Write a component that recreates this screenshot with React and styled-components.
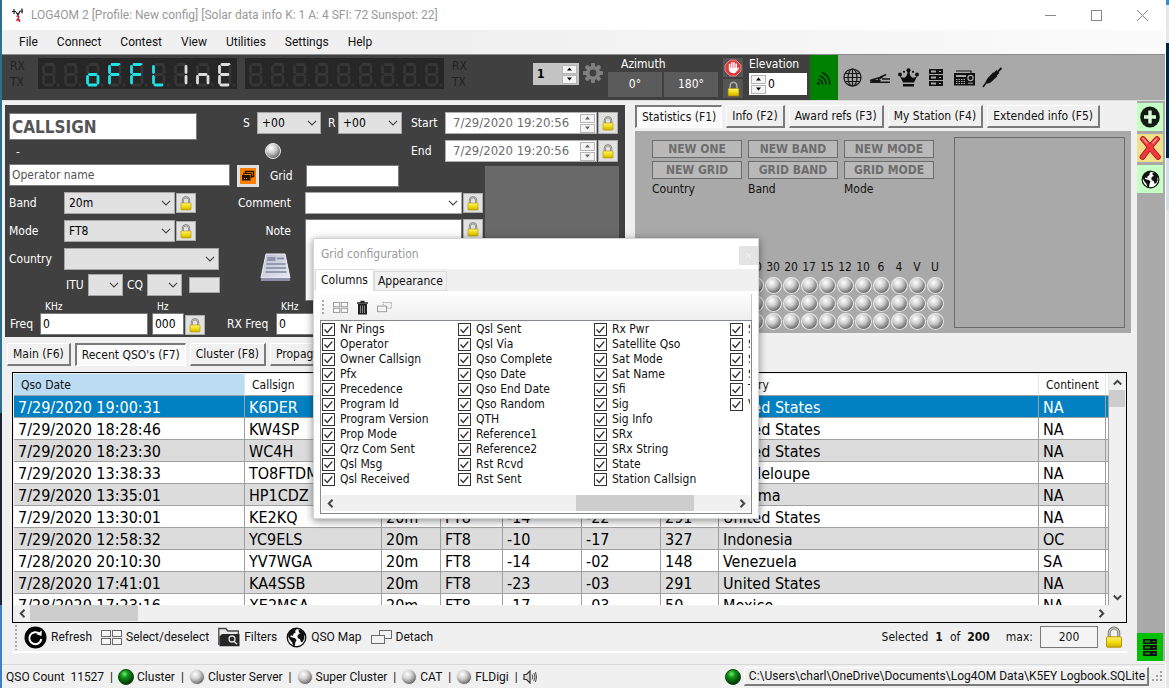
import React from "react";
import styled, { createGlobalStyle, css } from "styled-components";

const ui = `"DejaVu Sans Condensed", "Noto Sans", sans-serif`;
const shell = `Roboto, "Open Sans", sans-serif`;

const GlobalStyle = createGlobalStyle`
  *, *::before, *::after { box-sizing: border-box; }
  body { margin: 0; font-family: ${ui}; font-size: 12px; line-height: 16px; color: #111; }
  button, input, select, textarea { font: inherit; color: inherit; margin: 0; padding: 0; border-radius: 0; }
  button { background: none; border: 0; }
  svg { display: block; flex: none; }
`;

/* ---------- shell ---------- */

const Desktop = styled.div`
  display: flex;
  height: 100vh;
  min-height: 640px;
  padding: 0 3px 0 2px;
  background: linear-gradient(#3c8ecb 5px, #e4e8ea 5px 43px, #04233f 43px 158px, #d3dde6 158px 210px, #e6e6e6 210px) right / 3px 100% no-repeat,
    linear-gradient(#2d6f8c 0 60%, #1c2535 60% 88%, #3f7fc8 88%);
`;
const Window = styled.div`
  position: relative;
  flex: 1;
  min-width: 0;
  display: flex;
  flex-direction: column;
  background: #f0f0f0;
  border-right: 1px solid #fff;
`;
const TitleBar = styled.header`
  display: flex;
  align-items: center;
  height: 30px;
  padding: 0 16px 0 9px;
  gap: 6px;
  background: #fff;
  color: #999;
  font-family: ${shell};
`;
const TitleText = styled.h1`
  flex: 1;
  margin: 0;
  font-size: 12px;
  font-weight: 400;
  white-space: nowrap;
`;
const WindowButtons = styled.div`
  display: flex;
  gap: 33px;
  button { width: 13px; height: 13px; }
`;
const MenuBar = styled.nav`
  display: flex;
  align-items: center;
  gap: 19px;
  height: 24px;
  padding-left: 17px;
  background: linear-gradient(90deg, #f0f0f0 40%, #fbfbfb);
  font-family: ${shell};
`;
const MenuItem = styled.button``;

/* ---------- rig bar ---------- */

const RigBar = styled.div`
  display: flex;
  height: 47px;
  border-top: 1px solid #8c8c8c;
  border-bottom: 1px solid #dcdcdc;
  background: #a9a9a9;
`;
const RigDark = styled.div`
  display: flex;
  flex: none;
  width: 808px;
  padding: 3px 0 0 8px;
  background: #404040;
  color: #fff;
`;
const RxTx = styled.div`
  width: 28px;
  color: #222;
  line-height: 16px;
`;
const Led = styled.div`
  width: 199px;
  height: 31px;
  padding: 4px 0 0 4px;
  margin-right: 8px;
  background: #262626;
`;
const RigTools = styled.div`
  display: flex;
  align-items: flex-start;
  margin-left: auto;
  padding-right: 3px;
`;
const Stack = styled.div`
  display: flex;
  flex-direction: column;
  gap: ${(p) => p.$gap || 0}px;
  margin-left: ${(p) => p.$ml || 0}px;
`;
const FieldCaption = styled.span`
  padding-left: ${(p) => p.$pad || 0}px;
  line-height: 12px;
`;
const RigNumber = styled.div`
  display: flex;
  gap: 4px;
  padding-top: 5px;
`;
const Heading = styled.div`
  display: flex;
  gap: 2px;
`;
const HeadingValue = styled.output`
  width: 54px;
  height: 25px;
  background: #5b5b5b;
  text-align: center;
  line-height: 25px;
`;
const SpinBox = styled.div`
  display: flex;
  align-items: center;
  width: ${(p) => p.$w}px;
  height: 22px;
  padding: 1px;
  background: ${(p) => p.$bg || "#fff"};
  border: 1px solid ${(p) => p.$bg || "#fff"};
  color: #000;
  input {
    flex: 1;
    min-width: 0;
    width: 0;
    padding-left: 2px;
    border: 0;
    background: transparent;
    font-weight: ${(p) => (p.$bold ? 700 : 400)};
  }
`;
const SpinButtons = styled.div`
  display: flex;
  flex-direction: column;
  gap: 1px;
  width: 15px;
  button {
    display: grid;
    place-items: center;
    height: 9px;
    background: #f4f4f4;
    border: 1px solid #b5b5b5;
  }
`;
const ToolIcon = styled.button`
  display: grid;
  place-items: center;
  width: 28px;
  height: 45px;
  background: ${(p) => (p.$on ? "#008000" : "transparent")};
`;
const SquareTool = styled.button`
  display: grid;
  place-items: center;
  width: 20px;
  height: 19px;
  background: #555;
`;

/* ---------- body ---------- */

const Body = styled.main`
  flex: 1;
  min-height: 0;
  display: flex;
  margin-bottom: 3px;
`;
const Content = styled.div`
  flex: 1;
  min-width: 0;
  display: flex;
  flex-direction: column;
  padding-top: 4px;
`;
const Rail = styled.aside`
  display: flex;
  flex-direction: column;
  gap: 3px;
  width: 28px;
  padding-top: 2px;
  background: #a9a9a9;
`;
const RailButton = styled.button`
  display: grid;
  place-items: center;
  width: 26px;
  height: 28px;
  background: ${(p) => p.$bg};
  &:last-child { margin-top: auto; }
`;
const Upper = styled.div`
  display: flex;
  gap: 10px;
  height: 232px;
  padding: 0 6px 0 3px;
`;

/* ---------- QSO entry ---------- */

const Entry = styled.form`
  flex: none;
  width: 620px;
  background: #404040;
  color: #fff;
`;
const EntryTop = styled.div`
  display: flex;
  height: 192px;
`;
const EntryLeft = styled.div`
  width: 227px;
  padding: 8px 0 0 4px;
`;
const EntryRight = styled.div`
  flex: 1;
  padding: 7px 0 0 5px;
`;
const TextInput = styled.input`
  width: ${(p) => p.$w}px;
  height: ${(p) => p.$h || 22}px;
  padding: 0 2px;
  background: #fff;
  border: 1px solid #7a7a7a;
  color: #000;
  font-size: ${(p) => p.$size || 12}px;
  font-weight: ${(p) => (p.$bold ? 700 : 400)};
  &::placeholder { color: #555; opacity: 1; }
`;
const Dash = styled.div`
  height: 24px;
  padding-left: 7px;
  line-height: 24px;
`;
const FormRow = styled.div`
  display: flex;
  align-items: center;
  gap: 1px;
  height: ${(p) => p.$h || 28}px;
  padding-left: ${(p) => p.$pl || 0}px;
  margin-top: ${(p) => p.$mt || 0}px;
`;
const Label = styled.label`
  flex: none;
  width: ${(p) => (p.$w ? p.$w + "px" : "auto")};
  margin-left: ${(p) => p.$ml || 0}px;
`;
const SelectWrap = styled.span`
  display: grid;
  align-items: center;
  width: ${(p) => p.$w}px;
  height: 22px;
  color: #000;
  select, svg { grid-area: 1 / 1; }
  select {
    width: 100%;
    height: 100%;
    padding: 0 18px 0 4px;
    appearance: none;
    background: ${(p) => (p.$white ? "#fff" : "#e1e1e1")};
    border: 1px solid #a6a6a6;
  }
  svg { justify-self: end; margin-right: 4px; pointer-events: none; }
`;
const LockButton = styled.button`
  display: grid;
  place-items: center;
  flex: none;
  width: 20px;
  height: ${(p) => p.$h || 20}px;
  background: #e1e1e1;
  border: 1px solid #adadad;
`;
const ZoneBox = styled.output`
  width: 31px;
  height: 16px;
  margin-left: 6px;
  background: #e1e1e1;
  border: 1px solid #a6a6a6;
`;
const DateBox = styled.div`
  display: flex;
  align-items: center;
  width: 152px;
  height: 22px;
  padding: 1px;
  background: #fff;
  border: 1px solid #b0b0b0;
  color: #6d6d6d;
  font-size: 13px;
  input {
    flex: 1;
    width: 0;
    min-width: 0;
    padding-left: 6px;
    border: 0;
    background: transparent;
  }
`;
const EntryDetail = styled.div`
  display: flex;
`;
const DetailFields = styled.div`
  width: 248px;
`;
const DetailRow = styled.div`
  display: flex;
  align-items: ${(p) => (p.$top ? "flex-start" : "center")};
  gap: 1px;
  margin-top: ${(p) => p.$mt || 0}px;
`;
const LookupButton = styled.button`
  display: grid;
  place-items: center;
  width: 22px;
  height: 22px;
  border: 3px solid #e1e1e1;
  background: #ff8000;
`;
const NoteSide = styled.div`
  display: flex;
  flex-direction: column;
  align-items: flex-end;
  gap: 14px;
  width: 54px;
  padding-top: 4px;
`;
const NoteArea = styled.textarea`
  width: 157px;
  height: 82px;
  margin-left: 13px;
  resize: none;
  background: #fff;
  border: 1px solid #7a7a7a;
`;
const Photo = styled.div`
  width: 134px;
  height: 134px;
  margin-top: 4px;
  background: #696969;
`;
const FreqRow = styled.div`
  display: flex;
  align-items: flex-end;
  gap: 1px;
  height: 38px;
  padding-left: 5px;
`;
const FreqField = styled.label`
  display: flex;
  flex-direction: column;
  margin-right: ${(p) => p.$mr || 0}px;
  span { padding-left: 5px; font-size: 10px; line-height: 13px; }
`;
const FreqLabel = styled.span`
  width: ${(p) => p.$w}px;
  margin-left: ${(p) => p.$ml || 0}px;
  line-height: 22px;
`;

/* ---------- tabs ---------- */

const TabRow = styled.div`
  display: flex;
  gap: 4px;
  margin: ${(p) => p.$m || 0};
`;
const Tab = styled.button`
  padding: 0 5px;
  height: 23px;
  white-space: nowrap;
  background: #f0f0f0;
  border: 1px solid #fff;
  border-right: 2px solid #7b7b7b;
  border-bottom: 2px solid #7b7b7b;
  ${(p) =>
    p.$active &&
    css`
      background: #fafafa;
      border: 1px solid #fff;
      border-top: 2px solid #7b7b7b;
      border-left: 2px solid #7b7b7b;
    `}
`;

/* ---------- statistics ---------- */

const StatsColumn = styled.section`
  flex: 1;
  min-width: 0;
  display: flex;
  flex-direction: column;
`;
const StatsPanel = styled.div`
  display: flex;
  height: 202px;
  margin-top: 3px;
  background: #a9a9a9;
`;
const StatsMain = styled.div`
  flex: 1;
  display: flex;
  flex-direction: column;
  padding: 9px 10px 3px 17px;
`;
const FlagGrid = styled.div`
  display: grid;
  grid-template-columns: repeat(3, 90px);
  gap: 3px 6px;
`;
const Flag = styled.button`
  height: 18px;
  background: #b9b9b9;
  border: 1px solid #6d6d6d;
  color: #6d6d6d;
  font-weight: 700;
  line-height: 16px;
`;
const FlagLabel = styled.span`
  line-height: 14px;
`;
const BandGrid = styled.div`
  display: grid;
  grid-template-columns: repeat(14, 18px);
  grid-auto-rows: 18px;
  place-items: center;
  margin: auto 0 0 auto;
`;
const Preview = styled.div`
  width: 171px;
  margin: 6px 6px 5px 0;
  border: 1px solid #6b6b6b;
`;

/* ---------- log table ---------- */

const LogBox = styled.section`
  flex: 1;
  min-height: 0;
  display: grid;
  grid-template-columns: minmax(0, 1fr) 16px;
  grid-template-rows: minmax(0, 1fr) 16px;
  margin: 6px 10px 0;
  padding: 1px;
  border: 1px solid #000;
`;
const LogView = styled.div`
  overflow: hidden;
  background: #fff;
`;
const LogTable = styled.table`
  width: 100%;
  table-layout: fixed;
  border-collapse: separate;
  border-spacing: 0;
  font-size: 16px;
  th {
    height: 22px;
    padding: 0 7px;
    text-align: left;
    font-size: 12px;
    font-weight: 400;
    background: #fff;
    border-right: 1px solid #dfe6ea;
    border-bottom: 1px solid #a0a0a0;
  }
  th:first-child { background: #bbdcf3; }
  td {
    height: 22px;
    padding: 2px 4px 0;
    line-height: 19px;
    white-space: nowrap;
    overflow: hidden;
    border-right: 1px solid #a0a0a0;
    border-bottom: 1px solid #a0a0a0;
  }
`;
const LogRow = styled.tr`
  background: ${(p) => (p.$selected ? "#0180c2" : p.$alt ? "#dcdcdc" : "#fff")};
  color: ${(p) => (p.$selected ? "#fff" : "#000")};
`;
const ScrollBar = styled.div`
  display: flex;
  flex-direction: ${(p) => (p.$vertical ? "column" : "row")};
  align-items: stretch;
  background: #f0f0f0;
`;
const ScrollArrow = styled.button`
  display: grid;
  place-items: center;
  width: 16px;
  height: 16px;
  &:last-child { margin: ${(p) => p.$push || "0 0 0 auto"}; }
`;
const Thumb = styled.div`
  width: ${(p) => p.$w}px;
  height: ${(p) => p.$h}px;
  margin-left: ${(p) => p.$offset || 0}px;
  background: #cdcdcd;
`;
const LogTools = styled.div`
  display: flex;
  align-items: center;
  height: 30px;
  margin: 0 10px 8px;
  padding: 0 4px 0 3px;
  border-bottom: 2px solid #fff;
`;
const LogTool = styled.button`
  display: flex;
  align-items: center;
  gap: 4px;
  margin-left: ${(p) => p.$ml || 9}px;
  font-family: ${shell};
  white-space: nowrap;
`;
const LogCount = styled.div`
  display: flex;
  align-items: center;
  gap: 7px;
  margin-left: auto;
  white-space: nowrap;
  input {
    width: 58px;
    height: 22px;
    background: #f4f4f4;
    border: 1px solid #7a7a7a;
    text-align: center;
  }
`;

/* ---------- status bar ---------- */

const StatusBar = styled.footer`
  display: flex;
  align-items: center;
  height: 24px;
  padding: 0 1px 0 4px;
  border-top: 1px solid #d7d7d7;
  font-family: ${shell};
  white-space: nowrap;
`;
const StatusItem = styled.span`
  display: flex;
  align-items: center;
  gap: 3px;
  margin-left: ${(p) => (p.$end ? "auto" : 0)};
`;
const Bar = styled.span`
  margin: 0 2px 0 6px;
`;
const PathButton = styled.button`
  height: 19px;
  padding: 0 2px 0 4px;
  border: 1px solid #fff;
  border-right: 2px solid #7b7b7b;
  border-bottom: 2px solid #7b7b7b;
`;

/* ---------- dialog ---------- */

const Dialog = styled.section`
  position: absolute;
  left: 311px;
  top: 238px;
  width: 446px;
  padding-bottom: 4px;
  background: #fff;
  border: 1px solid #d4d4d4;
  box-shadow: 0 2px 8px rgba(0, 0, 0, 0.45);
`;
const DialogTitle = styled.header`
  display: flex;
  justify-content: space-between;
  align-items: flex-start;
  height: 30px;
  padding: 7px 0 0 7px;
  color: #999;
  h2 { margin: 0; font-size: 12px; font-weight: 400; }
`;
const DialogClose = styled.button`
  display: grid;
  place-items: center;
  width: 19px;
  height: 19px;
  background: #e3e3e3;
`;
const DialogTabs = styled.div`
  display: flex;
  align-items: flex-end;
  height: 22px;
  padding-left: 1px;
  background: #f0f0f0;
`;
const DialogTab = styled.button`
  height: ${(p) => (p.$active ? 22 : 20)}px;
  padding: 0 ${(p) => (p.$active ? 5 : 3)}px;
  background: ${(p) => (p.$active ? "#fff" : "#f0f0f0")};
  border: 1px solid #dcdcdc;
  border-bottom-color: ${(p) => (p.$active ? "#fff" : "#dcdcdc")};
`;
const DialogTools = styled.div`
  display: flex;
  align-items: center;
  height: 26px;
  margin: 3px 6px 0;
  padding-left: 2px;
  background: linear-gradient(#fdfdfd, #efefef);
  border-right: 1px solid #c8c8c8;
  button { margin-left: 9px; }
`;
const ColumnBox = styled.div`
  margin: 0 6px;
  padding: 0 1px 2px;
  border: 1px solid #828790;
`;
const ColumnList = styled.div`
  display: grid;
  grid-auto-flow: column;
  grid-auto-columns: 136px;
  grid-template-rows: repeat(11, 15px);
  height: 174px;
  padding-top: 1px;
  overflow: hidden;
`;
const ColumnItem = styled.label`
  display: flex;
  align-items: center;
  gap: 5px;
  height: 15px;
  line-height: 15px;
  white-space: nowrap;
`;
const Check = styled.span`
  display: grid;
  width: 13px;
  height: 13px;
  input, svg { grid-area: 1 / 1; }
  input {
    appearance: none;
    width: 13px;
    height: 13px;
    background: #fff;
    border: 1px solid #333;
  }
  svg { pointer-events: none; visibility: hidden; }
  input:checked + svg { visibility: visible; }
`;

/* ---------- icons ---------- */

const Chevron = ({ turn = 0, size = 9, weight = 1 }) => (
  <svg width={size} height={size} viewBox="0 0 9 9">
    <path d="M.8 2.5 4.5 6.2 8.2 2.5" fill="none" stroke="#444" strokeWidth={weight} transform={`rotate(${turn} 4.5 4.5)`} />
  </svg>
);
const Triangle = ({ up, color = "#000" }) => (
  <svg width="7" height="4" viewBox="0 0 7 4">
    <path d={up ? "M3.5 .5 6 3.5H1z" : "M3.5 3.5 6 .5H1z"} fill={color} />
  </svg>
);
const LockIcon = ({ w = 12, h = 15 }) => (
  <svg width={w} height={h} viewBox="0 0 12 15">
    <defs>
      <linearGradient id="lockBody" x1="0" x2="0" y1="0" y2="1">
        <stop offset="0" stopColor="#fff27a" />
        <stop offset=".5" stopColor="#f2dd10" />
        <stop offset="1" stopColor="#cfae00" />
      </linearGradient>
    </defs>
    <path d="M2.800 8V4.600a3.200 3.400 0 0 1 6.400 0V8" fill="none" stroke="#77766a" strokeWidth="2" />
    <path d="M2.800 8V4.600a3.200 3.400 0 0 1 6.400 0V8" fill="none" stroke="#c9c9c4" strokeWidth=".8" />
    <rect x="1" y="7" width="10" height="7" rx=".8" fill="url(#lockBody)" stroke="#b39200" strokeWidth=".6" />
  </svg>
);
const Ball = ({ green, size = 16 }) => (
  <svg width={size} height={size} viewBox="0 0 16 16">
    <defs>
      <radialGradient id="ballGrey" cx=".38" cy=".32" r=".7">
        <stop offset="0" stopColor="#fff" />
        <stop offset=".45" stopColor="#cfcfcf" />
        <stop offset="1" stopColor="#5e5e5e" />
      </radialGradient>
      <radialGradient id="ballGreen" cx=".4" cy=".3" r=".7">
        <stop offset="0" stopColor="#6cf06c" />
        <stop offset=".35" stopColor="#12941a" />
        <stop offset="1" stopColor="#012c03" />
      </radialGradient>
    </defs>
    <circle cx="8" cy="8" r="7.5" fill={green ? "url(#ballGreen)" : "url(#ballGrey)"} stroke={green ? "#0a4a0a" : "#e9e9e9"} strokeWidth="1" />
  </svg>
);

const SEGMENTS = {
  a: [4, 1.5, 11, 1.5],
  b: [12, 3.5, 12, 9.5],
  c: [12, 13.5, 12, 20],
  d: [3, 22, 10, 22],
  e: [1.5, 13.5, 1.5, 20],
  f: [1.5, 3.5, 1.5, 9.5],
  g: [3.5, 11.5, 10, 11.5],
};
const LIT = { o: "cdeg", F: "aefg", L: "def", I: "bc", n: "ceg", E: "adefg" };

const LedDisplay = ({ chars = "" }) => (
  <svg width="198" height="25" viewBox="0 0 198 25" aria-hidden="true">
    {Array.from({ length: 9 }, (_, i) => {
      const lit = LIT[chars[i]] || "";
      const color = i < 6 ? "#20e0e8" : "#dcdcdc";
      return (
        <g key={i} transform={`translate(${i * 22} 1)`} strokeLinecap="round">
          {Object.entries(SEGMENTS).map(([name, [x1, y1, x2, y2]]) => (
            <line key={name} x1={x1} y1={y1} x2={x2} y2={y2} stroke={lit.includes(name) ? color : "#363636"} strokeWidth="2.8" />
          ))}
          <circle cx="16" cy="22" r="1.4" fill="#363636" />
        </g>
      );
    })}
  </svg>
);

const AppIcon = () => (
  <svg width="14" height="16" viewBox="0 0 14 16">
    <path d="M1 4.5h4M3 2v5M5 5l2 3 2-4M9 4h3M11 1.5v5M7 8V6" stroke="#222" strokeWidth="1.2" fill="none" />
    <path d="M5.5 9.5c2-1.2 3 .2 1.5 1.5M8 10.500l-2 2.500h2.500v2" stroke="#c1272d" strokeWidth="1.4" fill="none" />
  </svg>
);
const GearIcon = () => (
  <svg width="20" height="20" viewBox="0 0 20 20">
    {[0, 45, 90, 135].map((a) => (
      <rect key={a} x="8" y="0" width="4" height="20" rx="1" fill="#808080" transform={`rotate(${a} 10 10)`} />
    ))}
    <circle cx="10" cy="10" r="7.2" fill="#808080" />
    <circle cx="10" cy="10" r="3.4" fill="#404040" />
  </svg>
);
const StopIcon = () => (
  <svg width="18" height="18" viewBox="0 0 18 18">
    <path d="M6 1h6l5 5v6l-5 5H6l-5-5V6z" fill="#e03a40" stroke="#f59a9a" strokeWidth=".8" />
    <path d="M5.600 9V5.500M7.800 8V3.800M10 8V3.800M12.200 9V5" stroke="#fff" strokeWidth="1.500" strokeLinecap="round" />
    <path d="M4.900 8.500h8v2.300c0 2-1.300 3.400-3.200 3.400-2.500 0-3.800-1-4.800-3z" fill="#fff" />
    <path d="M13 11.200l1.300-2" stroke="#fff" strokeWidth="1.400" strokeLinecap="round" />
  </svg>
);
const SignalIcon = () => (
  <svg width="16" height="16" viewBox="0 0 16 16" fill="none" stroke="#0a260a" strokeWidth="1.500">
    <circle cx="2.500" cy="13.500" r="1.500" fill="#0a260a" stroke="none" />
    <path d="M2 9.500a4.500 4.500 0 0 1 4.500 5M3.500 6a8 8 0 0 1 6.500 8.500M6 2.500a11 11 0 0 1 7.500 12" />
  </svg>
);
const GlobeIcon = () => (
  <svg width="19" height="19" viewBox="0 0 19 19" fill="none" stroke="#151515" strokeWidth="1.200">
    <circle cx="9.500" cy="9.500" r="8.500" />
    <ellipse cx="9.500" cy="9.500" rx="4.500" ry="8.500" />
    <path d="M9.500 1v17M1 9.500h17M2.500 5.500h14M2.500 13.500h14" />
  </svg>
);
const KeyerIcon = () => (
  <svg width="22" height="12" viewBox="0 0 22 12">
    <path d="M1 9.500h20V11H1zM3 8h9l-1 1.500H2z" fill="#151515" />
    <path d="M1 8.500 11 5.500 17 2.500M9 8l4-3M13 7h8" stroke="#151515" strokeWidth="1.400" fill="none" />
    <circle cx="12.500" cy="5" r="1.200" fill="#151515" />
  </svg>
);
const CrownIcon = () => (
  <svg width="21" height="19" viewBox="0 0 21 19" fill="#0c0c0c">
    <path d="M5 14.500 1.600 7.500C4 10 6.500 10.500 8 8.500 9.300 7 9.500 5 9.500 3h2c0 2 .2 4 1.500 5.500 1.500 2 4 1.500 6.400-1L16 14.500zM5 16h11v2.500H5z" />
    <circle cx="2" cy="6.500" r="1.900" />
    <circle cx="10.500" cy="2.300" r="2" />
    <circle cx="19" cy="6.500" r="1.900" />
    <circle cx="6" cy="3.800" r="1.100" />
    <circle cx="15" cy="3.800" r="1.100" />
  </svg>
);
const ServerIcon = ({ tint = "#a9a9a9" }) => (
  <svg width="14" height="17" viewBox="0 0 14 17">
    {[0, 6, 12].map((y) => (
      <g key={y}>
        <rect x="0" y={y} width="14" height="5" fill="#101010" />
        <rect x="2" y={y + 1.5} width="5" height="2" fill={tint} />
        <rect x="10" y={y + 2} width="2" height="1" fill={tint} />
      </g>
    ))}
  </svg>
);
const RadioIcon = () => (
  <svg width="21" height="17" viewBox="0 0 21 17">
    <path d="M2 2h15v2" stroke="#101010" strokeWidth="1.200" fill="none" />
    <rect x="0" y="4" width="21" height="12.500" fill="#101010" />
    <rect x="2" y="6" width="10" height="2" fill="#a9a9a9" />
    <path d="M2 10.500h10M2 12.500h10M2 14.500h10" stroke="#a9a9a9" strokeWidth="1" strokeDasharray="1.500 1" />
    <circle cx="16.500" cy="9" r="2.600" fill="none" stroke="#a9a9a9" strokeWidth="1.200" />
    <path d="M14 14.200h5" stroke="#a9a9a9" />
  </svg>
);
const JackIcon = () => (
  <svg width="21" height="21" viewBox="0 0 21 21">
    <path d="M1 20 5 14.500" stroke="#101010" strokeWidth="1.600" />
    <path d="M4 16c-.4-2 .6-3.800 2.500-5.800l4.800-5 4 4-5 4.800C8.300 16 6 17 4 16z" fill="#101010" />
    <path d="m12.500 8 3.500-3.500" stroke="#101010" strokeWidth="4" />
    <path d="m16 4.500 3.500-3.500" stroke="#101010" strokeWidth="1.800" />
  </svg>
);
const EarthIcon = ({ size = 20 }) => (
  <svg width={size} height={size} viewBox="0 0 20 20">
    <circle cx="10" cy="10" r="8.800" fill="#fff" stroke="#111" strokeWidth="1.300" />
    <path d="M2.200 6.500C3.500 3.500 6 1.800 9 1.500l1.300 1.300-1.800.8.800 1.400-2.300 1.700-.4 1.800-1.800-.6-.8 1.200 1.800 1 2.600.4 1.700 1.900-1.200 2.200-.4 3.200-1.500.3-1.300-3.600L3.600 12 2 9z" fill="#111" />
    <path d="m12 3.200 2.500-.9c2.200 1.300 3.800 3.200 4.200 6l-1.500-.5.3 3-1.500 3.200-1.800.6-.8-3-2-.8-.6-2.300 1.600-2 1.400-.3-1.600-1.300z" fill="#111" />
  </svg>
);
const PlusIcon = () => (
  <svg width="20" height="22" viewBox="0 0 20 22">
    <ellipse cx="10" cy="11" rx="9.800" ry="10.500" fill="#141a14" />
    <path d="M10 4.500v13M4 11h12" stroke="#d9ffd9" strokeWidth="3.400" />
  </svg>
);
const CrossIcon = () => (
  <svg width="22" height="24" viewBox="0 0 22 24">
    <path d="M4 3c3 3 11 14 15 18M18 3C14 7 8 15 3.500 21" stroke="#9c1410" strokeWidth="5.600" strokeLinecap="round" fill="none" />
    <path d="M4 3c3 3 11 14 15 18M18 3C14 7 8 15 3.500 21" stroke="#f0383c" strokeWidth="4.200" strokeLinecap="round" fill="none" />
    <path d="M4 2.500 8 7M17.500 3 14 7" stroke="#ff9a9a" strokeWidth="1.500" strokeLinecap="round" />
  </svg>
);
const CardsIcon = () => (
  <svg width="14" height="12" viewBox="0 0 14 12" stroke="#221400" fill="none">
    <path d="M4.500 4V1.500h8v5H10" strokeWidth="1.500" />
    <path d="M2.500 6V3.500h8V8" />
    <rect x="1.500" y="5.500" width="7.500" height="4.500" fill="#221400" />
    <path d="M3 8.500h4" stroke="#ff8000" strokeDasharray="1 1" />
  </svg>
);
const PrinterIcon = () => (
  <svg width="31" height="30" viewBox="0 0 31 30">
    <defs>
      <linearGradient id="sheet" x1="0" x2="1" y1="0" y2="1">
        <stop offset="0" stopColor="#b9bdd0" />
        <stop offset="1" stopColor="#e8eaf4" />
      </linearGradient>
    </defs>
    <path d="M6 1h19l5 24H1z" fill="url(#sheet)" stroke="#f0f0f6" />
    <path d="M1 25h29v3H1z" fill="#8d90a6" />
    <path d="M7.500 4h8v4H7z" fill="#8f94aa" />
    <path d="M17 5.500h7M6.500 11h19M6 15h20M5.500 19h21" stroke="#8086a0" strokeWidth="1.600" />
  </svg>
);
const GridIcon = ({ w = 21, h = 15, color = "#6a6a6a" }) => (
  <svg width={w} height={h} viewBox="0 0 21 15" fill="#f6f6f6" stroke={color}>
    <rect x=".5" y=".5" width="9" height="6" />
    <rect x="11.500" y=".5" width="9" height="6" />
    <rect x=".5" y="8.500" width="9" height="6" />
    <rect x="11.500" y="8.500" width="9" height="6" />
  </svg>
);
const DetachIcon = ({ w = 21, h = 15, color = "#6a6a6a", dashed }) => (
  <svg width={w} height={h} viewBox="0 0 21 15" fill="#f2f2f2" stroke={color}>
    <rect x="8.500" y=".5" width="12" height="8" strokeDasharray={dashed ? "2 1" : undefined} />
    <rect x=".5" y="5.500" width="13" height="8" />
  </svg>
);
const TrashIcon = () => (
  <svg width="11" height="15" viewBox="0 0 11 15">
    <path d="M3.500 1.500h4M0 3h11" stroke="#222" strokeWidth="1.400" />
    <rect x="1" y="4" width="9" height="10.500" fill="#222" />
    <path d="M3.500 5.500v7.500M5.500 5.500v7.500M7.500 5.500v7.500" stroke="#aaa" strokeWidth=".7" />
  </svg>
);
const RefreshIcon = () => (
  <svg width="23" height="23" viewBox="0 0 23 23">
    <circle cx="11.500" cy="11.500" r="11" fill="#050505" />
    <path d="M15.500 7.800A6 6 0 1 0 17.300 13" fill="none" stroke="#fff" strokeWidth="2" />
    <path d="m17.800 4.500-.3 5.500-5-1.800z" fill="#fff" />
  </svg>
);
const FolderIcon = () => (
  <svg width="22" height="20" viewBox="0 0 22 20">
    <path d="M.8 18V1.500h7l2 2.500h10.500v3" fill="#e8e8e8" stroke="#444" strokeWidth="1.300" />
    <path d="M1.500 19.200V9.500L4 7h17.500v12.200z" fill="#262626" />
    <circle cx="14" cy="12" r="3" fill="none" stroke="#ddd" strokeWidth="1.300" />
    <path d="m16 14.300 3 3" stroke="#ddd" strokeWidth="1.500" />
  </svg>
);
const SpeakerIcon = () => (
  <svg width="14" height="14" viewBox="0 0 14 14" fill="none" stroke="#333">
    <path d="M1 4.500h2.500L7 1v12L3.500 9.500H1z" fill="#d8d8d8" strokeWidth="1.200" />
    <path d="M9 4.500q1.500 2.500 0 5M10.800 3q2.400 4 0 8M12.500 2q2 5 0 10" strokeWidth=".9" />
  </svg>
);
const GripIcon = ({ h = 22 }) => (
  <svg width="2" height={h}>
    <path d={`M1 1V${h}`} stroke="#a8a8a8" strokeWidth="2" strokeDasharray="2 2" />
  </svg>
);
const ResizeGrip = () => (
  <svg width="12" height="12" viewBox="0 0 12 12" fill="#a0a0a0">
    {[[8, 0], [4, 4], [8, 4], [0, 8], [4, 8], [8, 8]].map(([x, y]) => (
      <rect key={`${x}-${y}`} x={x} y={y} width="2" height="2" />
    ))}
  </svg>
);

/* ---------- composed controls ---------- */

const Select = ({ id, w, value = "", white, label }) => (
  <SelectWrap $w={w} $white={white}>
    <select id={id} aria-label={label} defaultValue={value}>
      <option>{value}</option>
    </select>
    <Chevron size={10} />
  </SelectWrap>
);
const Lock = ({ h }) => (
  <LockButton type="button" aria-label="Lock" $h={h}>
    <LockIcon />
  </LockButton>
);
const Spinner = ({ color }) => (
  <SpinButtons>
    <button type="button" aria-label="Increase"><Triangle up color={color} /></button>
    <button type="button" aria-label="Decrease"><Triangle color={color} /></button>
  </SpinButtons>
);
const DateField = ({ id }) => (
  <DateBox>
    <input id={id} defaultValue="7/29/2020 19:20:56" />
    <Spinner color="#666" />
  </DateBox>
);

/* ---------- data ---------- */

const MENUS = ["File", "Connect", "Contest", "View", "Utilities", "Settings", "Help"];
const STAT_TABS = ["Statistics (F1)", "Info (F2)", "Award refs (F3)", "My Station (F4)", "Extended info (F5)"];
const LOG_TABS = ["Main (F6)", "Recent QSO's (F7)", "Cluster (F8)", "Propagation (F9)"];
const FLAGS = ["NEW ONE", "NEW BAND", "NEW MODE", "NEW GRID", "GRID BAND", "GRID MODE"];
const BANDS = ["160", "80", "60", "40", "30", "20", "17", "15", "12", "10", "6", "4", "V", "U"];
const COLUMN_WIDTHS = [231, 137, 59, 62, 79, 79, 58, null, 67, 3];
const HEADERS = ["Qso Date", "Callsign", "Band", "Mode", "Sent", "Rcvd", "DXCC", "Country", "Continent", ""];
const ROWS = [
  ["7/29/2020 19:00:31", "K6DER", "20m", "FT8", "-10", "-12", "291", "United States", "NA"],
  ["7/29/2020 18:28:46", "KW4SP", "20m", "FT8", "-08", "-11", "291", "United States", "NA"],
  ["7/29/2020 18:23:30", "WC4H", "20m", "FT8", "-06", "-15", "291", "United States", "NA"],
  ["7/29/2020 13:38:33", "TO8FTDM", "20m", "FT8", "-18", "-20", "79", "Guadeloupe", "NA"],
  ["7/29/2020 13:35:01", "HP1CDZ", "20m", "FT8", "-12", "-16", "88", "Panama", "NA"],
  ["7/29/2020 13:30:01", "KE2KQ", "20m", "FT8", "-14", "-22", "291", "United States", "NA"],
  ["7/29/2020 12:58:32", "YC9ELS", "20m", "FT8", "-10", "-17", "327", "Indonesia", "OC"],
  ["7/28/2020 20:10:30", "YV7WGA", "20m", "FT8", "-14", "-02", "148", "Venezuela", "SA"],
  ["7/28/2020 17:41:01", "KA4SSB", "20m", "FT8", "-23", "-03", "291", "United States", "NA"],
  ["7/28/2020 17:23:16", "XE2MSA", "20m", "FT8", "-17", "-03", "50", "Mexico", "NA"],
];
const FIELDS = [
  "Nr Pings", "Operator", "Owner Callsign", "Pfx", "Precedence", "Program Id", "Program Version", "Prop Mode", "Qrz Com Sent", "Qsl Msg", "Qsl Received",
  "Qsl Sent", "Qsl Via", "Qso Complete", "Qso Date", "Qso End Date", "Qso Random", "QTH", "Reference1", "Reference2", "Rst Rcvd", "Rst Sent",
  "Rx Pwr", "Satellite Qso", "Sat Mode", "Sat Name", "Sfi", "Sig", "Sig Info", "SRx", "SRx String", "State", "Station Callsign",
  "Stx", "Stx String", "Submode", "Swl", "Tx Pwr", "Ve Prov",
];
const SERVICES = [["Cluster", true], ["Cluster Server"], ["Super Cluster"], ["CAT"], ["FLDigi"]];

/* ---------- sections ---------- */

const RigSection = () => (
  <RigBar>
    <RigDark>
      <RxTx>RX<br />TX</RxTx>
      <Led role="img" aria-label="Offline"><LedDisplay chars="  oFFLInE" /></Led>
      <Led role="img" aria-label="No frequency"><LedDisplay /></Led>
      <RxTx>RX<br />TX</RxTx>
      <RigTools>
        <RigNumber>
          <SpinBox $w={46} $bg="#c4c4c4" $bold>
            <input aria-label="Rig number" defaultValue="1" />
            <Spinner />
          </SpinBox>
          <GearIcon />
        </RigNumber>
        <Stack $ml={5} $gap={2}>
          <FieldCaption $pad={13}>Azimuth</FieldCaption>
          <Heading>
            <HeadingValue>0°</HeadingValue>
            <HeadingValue>180°</HeadingValue>
          </Heading>
        </Stack>
        <Stack $ml={5} $gap={2}>
          <SquareTool aria-label="Stop rotator"><StopIcon /></SquareTool>
          <SquareTool aria-label="Lock rotator"><LockIcon w={13} h={16} /></SquareTool>
        </Stack>
        <Stack $ml={6} $gap={3}>
          <FieldCaption>Elevation</FieldCaption>
          <SpinBox $w={58}>
            <Spinner />
            <input aria-label="Elevation" defaultValue="0" />
          </SpinBox>
        </Stack>
      </RigTools>
    </RigDark>
    <ToolIcon $on aria-label="Signal"><SignalIcon /></ToolIcon>
    <ToolIcon aria-label="Web"><GlobeIcon /></ToolIcon>
    <ToolIcon aria-label="Keyer"><KeyerIcon /></ToolIcon>
    <ToolIcon aria-label="Awards"><CrownIcon /></ToolIcon>
    <ToolIcon aria-label="Servers"><ServerIcon /></ToolIcon>
    <ToolIcon aria-label="Radio"><RadioIcon /></ToolIcon>
    <ToolIcon aria-label="Audio"><JackIcon /></ToolIcon>
  </RigBar>
);

const EntrySection = () => (
  <Entry>
    <EntryTop>
      <EntryLeft>
        <TextInput aria-label="Callsign" placeholder="CALLSIGN" $w={188} $h={27} $size={17} $bold />
        <Dash>-</Dash>
        <TextInput aria-label="Operator name" placeholder="Operator name" $w={221} />
        <FormRow $mt={3}>
          <Label htmlFor="band" $w={54}>Band</Label>
          <Select id="band" w={111} value="20m" />
          <Lock />
        </FormRow>
        <FormRow>
          <Label htmlFor="mode" $w={54}>Mode</Label>
          <Select id="mode" w={111} value="FT8" />
          <Lock />
        </FormRow>
        <FormRow>
          <Label htmlFor="country" $w={54}>Country</Label>
          <Select id="country" w={155} />
        </FormRow>
        <FormRow $h={24} $pl={57}>
          <Label htmlFor="itu" $w={21}>ITU</Label>
          <Select id="itu" w={35} />
          <Label htmlFor="cq" $w={19} $ml={3}>CQ</Label>
          <Select id="cq" w={35} />
          <ZoneBox />
        </FormRow>
      </EntryLeft>
      <EntryRight>
        <FormRow $h={22} $pl={6}>
          <Label htmlFor="sent" $w={13}>S</Label>
          <Select id="sent" w={64} value="+00" />
          <Label htmlFor="rcvd" $w={9} $ml={6}>R</Label>
          <Select id="rcvd" w={64} value="+00" />
          <Label htmlFor="start" $w={33} $ml={8}>Start</Label>
          <DateField id="start" />
          <Lock h={22} />
        </FormRow>
        <FormRow $h={22} $mt={6} $pl={28}>
          <Ball />
          <Label htmlFor="end" $w={33} $ml={129}>End</Label>
          <DateField id="end" />
          <Lock h={22} />
        </FormRow>
        <EntryDetail>
          <DetailFields>
            <DetailRow $mt={3}>
              <LookupButton type="button" aria-label="Lookup"><CardsIcon /></LookupButton>
              <Label htmlFor="grid" $w={35} $ml={10}>Grid</Label>
              <TextInput id="grid" $w={93} />
            </DetailRow>
            <DetailRow $mt={5}>
              <Label htmlFor="comment" $w={66} $ml={1}>Comment</Label>
              <Select id="comment" w={157} white />
              <Lock />
            </DetailRow>
            <DetailRow $mt={5} $top>
              <NoteSide>
                <Label htmlFor="note">Note</Label>
                <PrinterIcon />
              </NoteSide>
              <NoteArea id="note" />
              <Lock />
            </DetailRow>
          </DetailFields>
          <Photo />
        </EntryDetail>
      </EntryRight>
    </EntryTop>
    <FreqRow>
      <FreqLabel $w={29}>Freq</FreqLabel>
      <FreqField $mr={3}><span>KHz</span><TextInput $w={108} defaultValue="0" /></FreqField>
      <FreqField><span>Hz</span><TextInput $w={32} defaultValue="000" /></FreqField>
      <Lock />
      <FreqLabel $w={48} $ml={21}>RX Freq</FreqLabel>
      <FreqField $mr={3}><span>KHz</span><TextInput $w={108} defaultValue="0" /></FreqField>
    </FreqRow>
  </Entry>
);

const StatsSection = () => (
  <StatsColumn>
    <TabRow>
      {STAT_TABS.map((t, i) => <Tab key={t} $active={i === 0}>{t}</Tab>)}
    </TabRow>
    <StatsPanel>
      <StatsMain>
        <FlagGrid>
          {FLAGS.map((f) => <Flag key={f}>{f}</Flag>)}
          <FlagLabel>Country</FlagLabel>
          <FlagLabel>Band</FlagLabel>
          <FlagLabel>Mode</FlagLabel>
        </FlagGrid>
        <BandGrid>
          {BANDS.map((b) => <span key={b}>{b}</span>)}
          {Array.from({ length: BANDS.length * 3 }, (_, i) => <Ball key={i} size={17} />)}
        </BandGrid>
      </StatsMain>
      <Preview />
    </StatsPanel>
  </StatsColumn>
);

const LogSection = () => (
  <>
    <LogBox>
      <LogView>
        <LogTable>
          <colgroup>
            {COLUMN_WIDTHS.map((w, i) => <col key={i} width={w || undefined} />)}
          </colgroup>
          <thead>
            <tr>{HEADERS.map((h, i) => <th key={i}>{h}</th>)}</tr>
          </thead>
          <tbody>
            {ROWS.map((row, r) => (
              <LogRow key={row[0]} $selected={r === 0} $alt={r % 2 === 0}>
                {row.map((cell, i) => <td key={i}>{cell}</td>)}
                <td />
              </LogRow>
            ))}
          </tbody>
        </LogTable>
      </LogView>
      <ScrollBar $vertical>
        <ScrollArrow aria-label="Scroll up"><Chevron turn={180} weight={2} /></ScrollArrow>
        <Thumb $w={16} $h={17} />
        <ScrollArrow aria-label="Scroll down" $push="auto 0 0 0"><Chevron weight={2} /></ScrollArrow>
      </ScrollBar>
      <ScrollBar>
        <ScrollArrow aria-label="Scroll left"><Chevron turn={90} weight={2} /></ScrollArrow>
        <Thumb $w={108} $h={16} />
        <ScrollArrow aria-label="Scroll right"><Chevron turn={270} weight={2} /></ScrollArrow>
      </ScrollBar>
    </LogBox>
    <LogTools>
      <GripIcon h={26} />
      <LogTool $ml={7}><RefreshIcon />Refresh</LogTool>
      <LogTool><GridIcon />Select/deselect</LogTool>
      <LogTool><FolderIcon />Filters</LogTool>
      <LogTool><EarthIcon size={21} />QSO Map</LogTool>
      <LogTool><DetachIcon />Detach</LogTool>
      <LogCount>
        <span>Selected</span>
        <b>1</b>
        <span>of</span>
        <b>200</b>
        <Label htmlFor="max" $ml={9}>max:</Label>
        <input id="max" defaultValue="200" />
        <LockIcon w={18} h={23} />
      </LogCount>
    </LogTools>
  </>
);

const GridDialog = () => (
  <Dialog role="dialog" aria-labelledby="dialog-title">
    <DialogTitle>
      <h2 id="dialog-title">Grid configuration</h2>
      <DialogClose aria-label="Close">
        <svg width="7" height="7" viewBox="0 0 7 7"><path d="m1 1 5 5M6 1 1 6" stroke="#f6f6f6" /></svg>
      </DialogClose>
    </DialogTitle>
    <DialogTabs>
      <DialogTab $active>Columns</DialogTab>
      <DialogTab>Appearance</DialogTab>
    </DialogTabs>
    <DialogTools>
      <GripIcon h={16} />
      <button aria-label="Select all"><GridIcon w={15} h={11} color="#808080" /></button>
      <button aria-label="Delete"><TrashIcon /></button>
      <button aria-label="Detach"><DetachIcon w={15} h={11} color="#808080" dashed /></button>
    </DialogTools>
    <ColumnBox>
      <ColumnList>
        {FIELDS.map((f) => (
          <ColumnItem key={f}>
            <Check>
              <input type="checkbox" defaultChecked />
              <svg width="13" height="13" viewBox="0 0 13 13"><path d="m2.500 6.500 2.800 3 5-6" fill="none" stroke="#333" strokeWidth="1.300" /></svg>
            </Check>
            {f}
          </ColumnItem>
        ))}
      </ColumnList>
      <ScrollBar>
        <ScrollArrow aria-label="Scroll left"><Chevron turn={90} weight={2} /></ScrollArrow>
        <Thumb $w={118} $h={16} $offset={238} />
        <ScrollArrow aria-label="Scroll right"><Chevron turn={270} weight={2} /></ScrollArrow>
      </ScrollBar>
    </ColumnBox>
  </Dialog>
);

export default function App() {
  return (
    <>
      <GlobalStyle />
      <Desktop>
        <Window>
          <TitleBar>
            <AppIcon />
            <TitleText>LOG4OM 2 [Profile: New config] [Solar data info K: 1 A: 4 SFI: 72 Sunspot: 22]</TitleText>
            <WindowButtons>
              <button aria-label="Minimize"><svg width="13" height="13"><path d="M1 6.500h11" stroke="#888" /></svg></button>
              <button aria-label="Maximize"><svg width="13" height="13"><rect x="1.500" y="1.500" width="10" height="10" fill="none" stroke="#888" /></svg></button>
              <button aria-label="Close"><svg width="13" height="13"><path d="m1 1 11 11M12 1 1 12" stroke="#888" /></svg></button>
            </WindowButtons>
          </TitleBar>
          <MenuBar>
            {MENUS.map((m) => <MenuItem key={m}>{m}</MenuItem>)}
          </MenuBar>
          <RigSection />
          <Body>
            <Content>
              <Upper>
                <EntrySection />
                <StatsSection />
              </Upper>
              <TabRow $m="6px 5px 0">
                {LOG_TABS.map((t, i) => <Tab key={t} $active={i === 1}>{t}</Tab>)}
              </TabRow>
              <LogSection />
            </Content>
            <Rail>
              <RailButton $bg="#c4ffc4" aria-label="Add QSO"><PlusIcon /></RailButton>
              <RailButton $bg="#f0e08c" aria-label="Clear QSO"><CrossIcon /></RailButton>
              <RailButton $bg="#c4ffc4" aria-label="World map"><EarthIcon size={19} /></RailButton>
              <RailButton $bg="#00c000" aria-label="Servers"><ServerIcon tint="#00a000" /></RailButton>
            </Rail>
          </Body>
          <StatusBar>
            <StatusItem>QSO Count&nbsp; 11527</StatusItem>
            {SERVICES.map(([name, on]) => (
              <StatusItem key={name}><Bar>|</Bar><Ball green={on} />{name}</StatusItem>
            ))}
            <StatusItem><Bar>|</Bar><SpeakerIcon /></StatusItem>
            <StatusItem $end>
              <Ball green />
              <PathButton>C:\Users\charl\OneDrive\Documents\Log4OM Data\K5EY Logbook.SQLite</PathButton>
              <ResizeGrip />
            </StatusItem>
          </StatusBar>
          <GridDialog />
        </Window>
      </Desktop>
    </>
  );
}
